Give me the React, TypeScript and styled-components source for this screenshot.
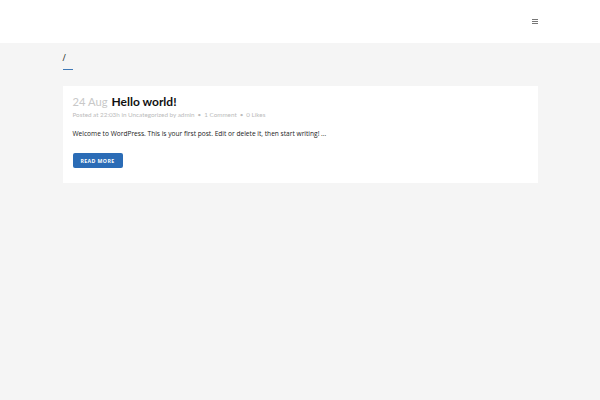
import styled, { createGlobalStyle } from 'styled-components'

const GlobalStyle = createGlobalStyle`
  html, body {
    margin: 0;
    padding: 0;
    background: #f5f5f5;
    font-family: "Open Sans", Lato, sans-serif;
  }
`

const Page = styled.div`
  min-height: 400px;
  background: #f5f5f5;
`

const TopBar = styled.header`
  height: 43px;
  background: #ffffff;
  display: flex;
  align-items: center;
  justify-content: flex-end;
  padding-right: 62px;
`

const MenuIcon = styled.button`
  width: 6px;
  height: 5px;
  padding: 0;
  border: 0;
  background: none;
  display: flex;
  flex-direction: column;
  justify-content: space-between;

  span {
    display: block;
    height: 1px;
    background: #777;
  }
`

const Container = styled.main`
  width: 475px;
  margin: 0 auto;
  padding-top: 9px;
`

const PageTitle = styled.h1`
  margin: 0;
  font-size: 9px;
  font-weight: 400;
  line-height: 12px;
  color: #222;
`

const TitleRule = styled.div`
  width: 10px;
  height: 1px;
  background: #3f78b5;
  margin-top: 5px;
`

const Card = styled.article`
  background: #ffffff;
  margin-top: 16px;
  padding: 9px 10px 15px;
`

const PostTitle = styled.h2`
  margin: 0;
  font-family: Lato, sans-serif;
  font-size: 12px;
  font-weight: 700;
  line-height: 14px;
  color: #111;
`

const PostDate = styled.span`
  color: #c8c8c8;
  font-size: 11.2px;
  font-weight: 400;
  margin-right: 4px;
`

const Meta = styled.div`
  margin-top: 2px;
  font-family: Lato, sans-serif;
  font-size: 6.3px;
  color: #bbb;
  line-height: 8px;

  .sep {
    margin: 0 3px;
  }
`

const Excerpt = styled.p`
  margin: 10px 0 0;
  font-size: 6.6px;
  line-height: 9px;
  color: #222;
`

const ReadMore = styled.a`
  display: flex;
  align-items: center;
  justify-content: center;
  margin-top: 15px;
  width: 50px;
  height: 15px;
  background: #2b6cb6;
  border-radius: 2px;
  color: #fff;
  font-size: 5.2px;
  font-weight: 700;
  letter-spacing: 0.4px;
  text-transform: uppercase;
  text-decoration: none;
`

export default function App() {
  return (
    <Page>
      <GlobalStyle />
      <TopBar>
        <MenuIcon aria-label="menu">
          <span />
          <span />
          <span />
        </MenuIcon>
      </TopBar>
      <Container>
        <PageTitle>/</PageTitle>
        <TitleRule />
        <Card>
          <PostTitle>
            <PostDate>24 Aug</PostDate>Hello world!
          </PostTitle>
          <Meta>
            Posted at 22:03h in Uncategorized by admin
            <span className="sep">•</span>1 Comment
            <span className="sep">•</span>0 Likes
          </Meta>
          <Excerpt>
            Welcome to WordPress. This is your first post. Edit or delete it, then start writing! ...
          </Excerpt>
          <ReadMore href="#">Read More</ReadMore>
        </Card>
      </Container>
    </Page>
  )
}
